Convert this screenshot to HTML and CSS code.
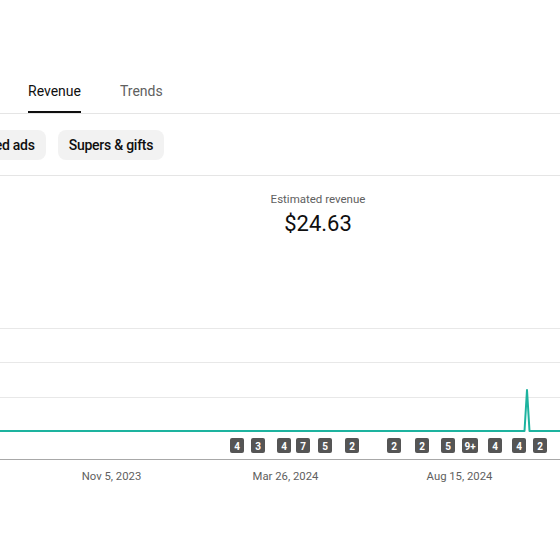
FILE: index.html
```html
<!DOCTYPE html>
<html>
<head>
<meta charset="utf-8">
<link rel="stylesheet" href="styles.css">
</head>
<body>
<div class="page">
  <nav class="tabs">
    <div class="tab active">Revenue</div>
    <div class="tab">Trends</div>
  </nav>
  <div class="chips">
    <div class="chip first">Shorts Feed ads</div>
    <div class="chip">Supers &amp; gifts</div>
  </div>
  <div class="summary">
    <div class="summary-label">Estimated revenue</div>
    <div class="summary-value">$24.63</div>
  </div>
  <div class="chart">
    <svg class="chart-svg" width="560" height="180" viewBox="0 0 560 180">
      <line class="grid" x1="0" y1="8.5" x2="560" y2="8.5"/>
      <line class="grid" x1="0" y1="42.5" x2="560" y2="42.5"/>
      <line class="grid" x1="0" y1="77.5" x2="560" y2="77.5"/>
      <polyline class="series" points="0,111 524.5,111 527,70 529.5,111 560,111"/>
      <line class="axis" x1="0" y1="139.5" x2="560" y2="139.5"/>
      <g class="badges">
        <rect x="230" y="118" width="14" height="15" rx="2"/><text x="237" y="129.5">4</text>
        <rect x="251" y="118" width="14" height="15" rx="2"/><text x="258" y="129.5">3</text>
        <rect x="277" y="118" width="14" height="15" rx="2"/><text x="284" y="129.5">4</text>
        <rect x="296" y="118" width="14" height="15" rx="2"/><text x="303" y="129.5">7</text>
        <rect x="318" y="118" width="14" height="15" rx="2"/><text x="325" y="129.5">5</text>
        <rect x="345" y="118" width="14" height="15" rx="2"/><text x="352" y="129.5">2</text>
        <rect x="387" y="118" width="14" height="15" rx="2"/><text x="394" y="129.5">2</text>
        <rect x="415" y="118" width="14" height="15" rx="2"/><text x="422" y="129.5">2</text>
        <rect x="441" y="118" width="14" height="15" rx="2"/><text x="448" y="129.5">5</text>
        <rect x="462" y="118" width="16" height="15" rx="2"/><text x="470" y="129.5">9+</text>
        <rect x="488" y="118" width="14" height="15" rx="2"/><text x="495" y="129.5">4</text>
        <rect x="512" y="118" width="14" height="15" rx="2"/><text x="519" y="129.5">4</text>
        <rect x="533" y="118" width="14" height="15" rx="2"/><text x="540" y="129.5">2</text>
      </g>
      <g class="labels">
        <text x="111.5" y="159.5">Nov 5, 2023</text>
        <text x="285.5" y="159.5">Mar 26, 2024</text>
        <text x="459.5" y="159.5">Aug 15, 2024</text>
      </g>
    </svg>
  </div>
</div>
</body>
</html>
```

FILE: styles.css
```css
html, body {
  margin: 0;
  padding: 0;
  background: #ffffff;
}

body {
  font-family: Roboto, "Liberation Sans", Arial, sans-serif;
  color: #0f0f0f;
  width: 560px;
  height: 560px;
  overflow: hidden;
}

.page {
  width: 560px;
}

.tabs {
  display: flex;
  gap: 39px;
  padding: 81px 0 0 28px;
  border-bottom: 1px solid #e5e5e5;
}

.tab {
  font-size: 14px;
  line-height: 20px;
  color: #606060;
  padding-bottom: 10px;
  border-bottom: 2px solid transparent;
}

.tab.active {
  color: #0f0f0f;
  border-bottom-color: #0f0f0f;
}

.chips {
  display: flex;
  gap: 12px;
  padding: 16px 0 15px;
  border-bottom: 1px solid #e5e5e5;
  overflow: hidden;
}

.chip {
  flex: none;
  height: 30px;
  line-height: 30px;
  padding: 0 11px;
  border-radius: 8px;
  background: #f2f2f2;
  font-size: 14px;
  font-weight: 500;
  letter-spacing: -0.25px;
  color: #0f0f0f;
  white-space: nowrap;
}

.chip.first {
  margin-left: -74px;
}

.summary {
  width: 636px;
  text-align: center;
  padding-top: 15px;
}

.summary-label {
  font-size: 11.5px;
  line-height: 16px;
  color: #606060;
}

.summary-value {
  margin-top: 3px;
  font-size: 22px;
  line-height: 28px;
  color: #0f0f0f;
}

.chart {
  margin-top: 82px;
  height: 180px;
}

.chart-svg {
  display: block;
}

.grid {
  stroke: #e8e8e8;
  stroke-width: 1;
}

.series {
  fill: none;
  stroke: #1db39f;
  stroke-width: 2;
  stroke-linejoin: round;
}

.axis {
  stroke: #a8a8a8;
  stroke-width: 1;
}

.badges rect {
  fill: #555555;
}

.badges text {
  fill: #ffffff;
  font-family: Roboto, "Liberation Sans", Arial, sans-serif;
  font-size: 10px;
  font-weight: 700;
  text-anchor: middle;
}

.labels text {
  fill: #606060;
  font-family: Roboto, "Liberation Sans", Arial, sans-serif;
  font-size: 11.3px;
  text-anchor: middle;
}
```
